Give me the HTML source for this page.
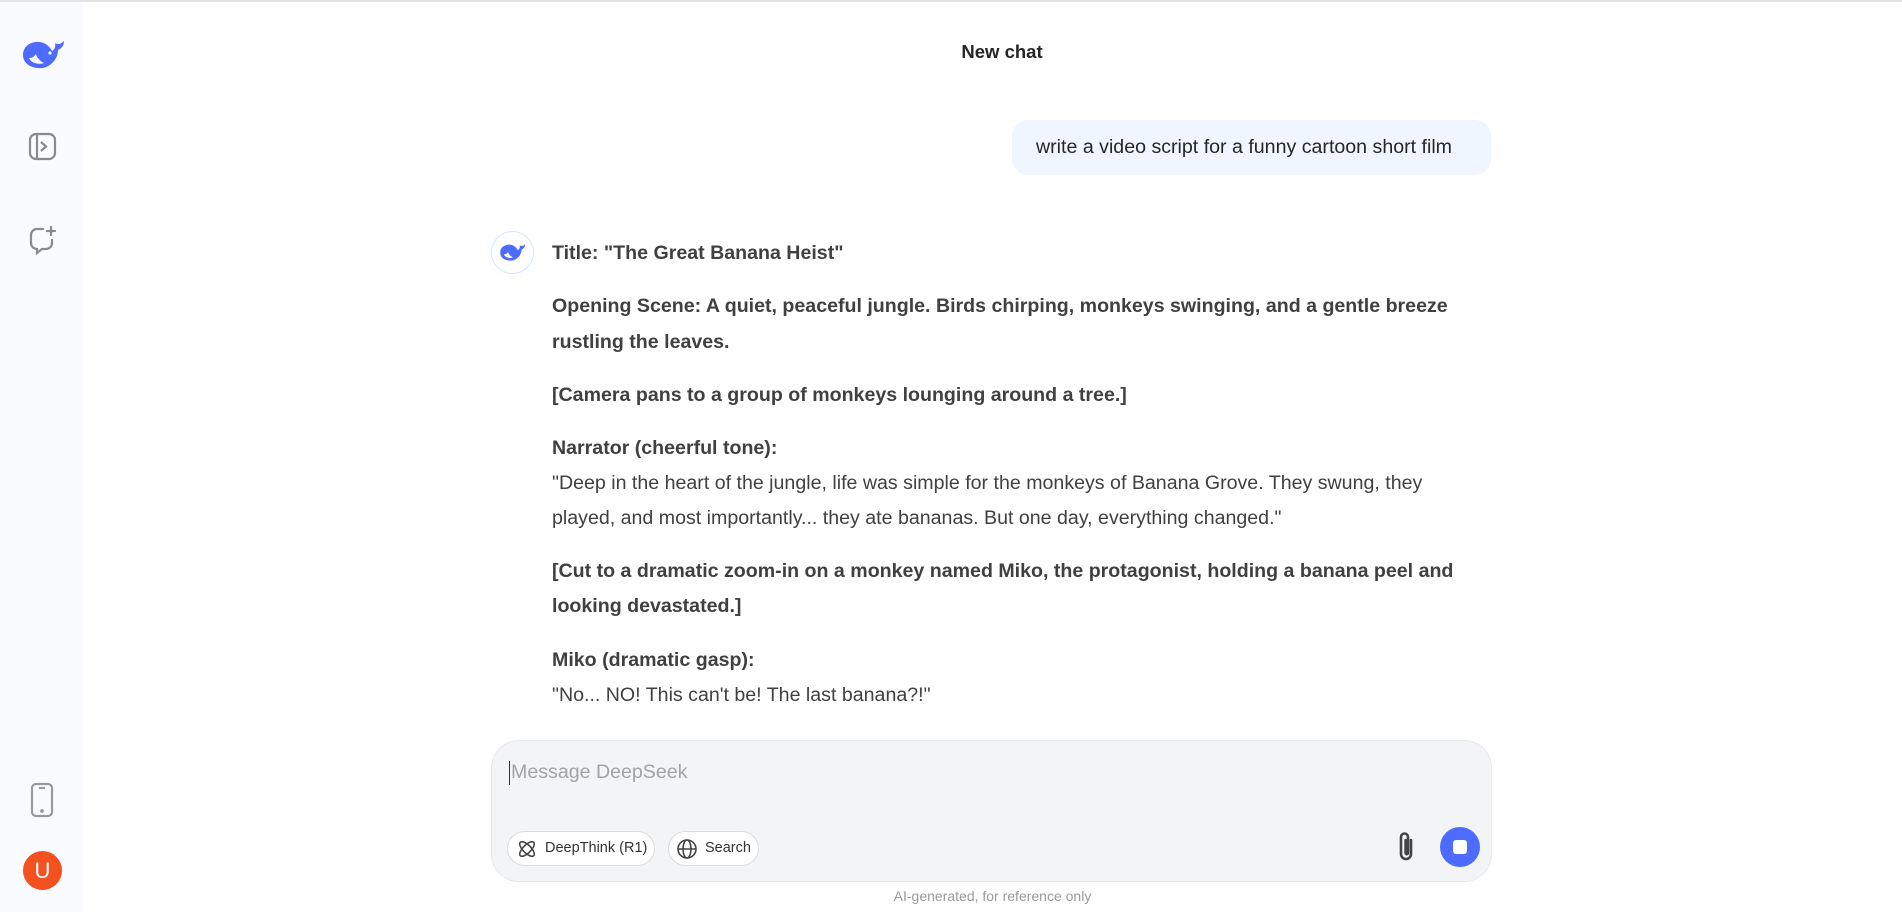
<!DOCTYPE html>
<html><head><meta charset="utf-8"><style>
*{margin:0;padding:0;box-sizing:border-box}
body{width:1902px;height:912px;overflow:hidden;background:#fff;font-family:"Liberation Sans",sans-serif;color:#404040;position:relative}
.top{position:absolute;left:0;top:0;width:1902px;height:2px;background:#e3e3e3}
.side{position:absolute;left:0;top:2px;width:83px;height:910px;background:#f9fbff}
.ab{position:absolute}
.l{position:absolute;left:552px;font-size:19.6px;white-space:nowrap;line-height:24px}
.b{font-weight:bold}
</style></head><body>
<div class="top"></div>
<div class="side"></div>
<!-- whale logo -->
<svg class="ab" style="left:21px;top:36px" width="46" height="36" viewBox="0 0 46 36"><path d="M2 19C2 10 10 5 19 6c6 1 10 5 12 9 2-1 4-4 3-8 3 2 6 1 9-2 0 4-2 7-6 9 0 8-6 16-15 18C11 33 2 28 2 19z" fill="#4d6bfe"/><path d="M8 22c2 5 9 7 15 5-4-2-7-5-8-9-2 3-4 4-7 4z" fill="#f9fbff"/><circle cx="29" cy="17" r="1.6" fill="#f9fbff"/></svg>
<!-- sidebar toggle -->
<svg class="ab" style="left:28px;top:132px" width="29" height="29" viewBox="0 0 29 29" fill="none" stroke="#8a8a8a" stroke-width="2.2"><rect x="2" y="2" width="25" height="25" rx="6"/><line x1="9" y1="2" x2="9" y2="27"/><path d="M13 10l5 4.5-5 4.5"/></svg>
<!-- new chat -->
<svg class="ab" style="left:28px;top:225px" width="30" height="30" viewBox="0 0 30 30" fill="none" stroke="#8a8a8a" stroke-width="2.2" stroke-linecap="round"><path d="M15 4H9a6 6 0 0 0-6 6v8a6 6 0 0 0 6 6h0v4l5-4h4a6 6 0 0 0 6-6v-3"/><path d="M23 2v8M19 6h8"/></svg>
<!-- phone -->
<svg class="ab" style="left:30px;top:782px" width="24" height="36" viewBox="0 0 24 36" fill="none" stroke="#9a9a9a" stroke-width="2.2"><rect x="2" y="2" width="20" height="32" rx="4"/><line x1="9" y1="6" x2="15" y2="6"/><circle cx="12" cy="29" r="0.8" fill="#9a9a9a"/></svg>
<div class="ab" style="left:23px;top:851px;width:39px;height:39px;border-radius:50%;background:#f4511e;color:#fff;font-size:22px;text-align:center;line-height:39px">U</div>

<div class="ab" style="left:0;width:1902px;top:41px;text-align:center;padding-left:102px;font-size:18.5px;font-weight:bold;color:#262626">New chat</div>

<div class="ab" style="left:1012px;top:120px;width:479px;height:55px;background:#eff6ff;border-radius:16px;font-size:19.6px;line-height:55px;padding-left:24px;color:#262626;white-space:nowrap">write a video script for a funny cartoon short film</div>

<div class="ab" style="left:491px;top:231px;width:43px;height:43px;border-radius:50%;border:1.5px solid #d5e4ff;background:#fff"></div>
<svg class="ab" style="left:499px;top:240px" width="28" height="24" viewBox="0 0 46 36"><path d="M2 19C2 10 10 5 19 6c6 1 10 5 12 9 2-1 4-4 3-8 3 2 6 1 9-2 0 4-2 7-6 9 0 8-6 16-15 18C11 33 2 28 2 19z" fill="#4d6bfe"/><path d="M8 22c2 5 9 7 15 5-4-2-7-5-8-9-2 3-4 4-7 4z" fill="#fff"/></svg>

<div class="l b" style="top:241px">Title: "The Great Banana Heist"</div>
<div class="l b" style="top:294px">Opening Scene: A quiet, peaceful jungle. Birds chirping, monkeys swinging, and a gentle breeze</div>
<div class="l b" style="top:330px">rustling the leaves.</div>
<div class="l b" style="top:383px">[Camera pans to a group of monkeys lounging around a tree.]</div>
<div class="l b" style="top:436px">Narrator (cheerful tone):</div>
<div class="l" style="top:471px">"Deep in the heart of the jungle, life was simple for the monkeys of Banana Grove. They swung, they</div>
<div class="l" style="top:506px">played, and most importantly... they ate bananas. But one day, everything changed."</div>
<div class="l b" style="top:559px">[Cut to a dramatic zoom-in on a monkey named Miko, the protagonist, holding a banana peel and</div>
<div class="l b" style="top:594px">looking devastated.]</div>
<div class="l b" style="top:648px">Miko (dramatic gasp):</div>
<div class="l" style="top:683px">"No... NO! This can't be! The last banana?!"</div>

<div class="ab" style="left:491px;top:740px;width:1001px;height:142px;background:#f3f4f6;border:1px solid #e5e7eb;border-radius:28px"></div>
<div class="ab" style="left:509px;top:761px;width:1px;height:24px;background:#333"></div>
<div class="ab" style="left:511px;top:761px;font-size:19.6px;color:#a3a3a3">Message DeepSeek</div>

<div class="ab" style="left:507px;top:831px;width:148px;height:35px;border:1px solid #dcdcdc;border-radius:18px;background:#fff;font-size:14.5px;line-height:33px;padding-left:37px;color:#333">DeepThink (R1)</div>
<svg class="ab" style="left:516px;top:838px" width="22" height="22" viewBox="0 0 22 22" fill="none" stroke="#444" stroke-width="1.6"><ellipse cx="11" cy="11" rx="9.5" ry="4" transform="rotate(45 11 11)"/><ellipse cx="11" cy="11" rx="9.5" ry="4" transform="rotate(-45 11 11)"/></svg>
<div class="ab" style="left:668px;top:831px;width:91px;height:35px;border:1px solid #dcdcdc;border-radius:18px;background:#fff;font-size:14.5px;line-height:33px;padding-left:36px;color:#333">Search</div>
<svg class="ab" style="left:676px;top:838px" width="22" height="22" viewBox="0 0 22 22" fill="none" stroke="#444" stroke-width="1.6"><circle cx="11" cy="11" r="9"/><ellipse cx="11" cy="11" rx="4" ry="9"/><line x1="2" y1="11" x2="20" y2="11"/></svg>

<svg class="ab" style="left:1393px;top:830px" width="26" height="34" viewBox="0 0 26 34" fill="none" stroke="#444" stroke-width="2.6" stroke-linecap="round"><path d="M18 10v14a5 5 0 0 1-10 0V7a3.5 3.5 0 0 1 7 0v16a1.2 1.2 0 0 1-2.4 0V10"/></svg>
<div class="ab" style="left:1440px;top:827px;width:40px;height:40px;border-radius:50%;background:#4d6bfe"></div>
<div class="ab" style="left:1453px;top:840px;width:14px;height:14px;border-radius:3px;background:#fff"></div>

<div class="ab" style="left:0;width:1902px;top:888px;text-align:center;padding-left:83px;font-size:14px;color:#9a9a9a">AI-generated, for reference only</div>
</body></html>
